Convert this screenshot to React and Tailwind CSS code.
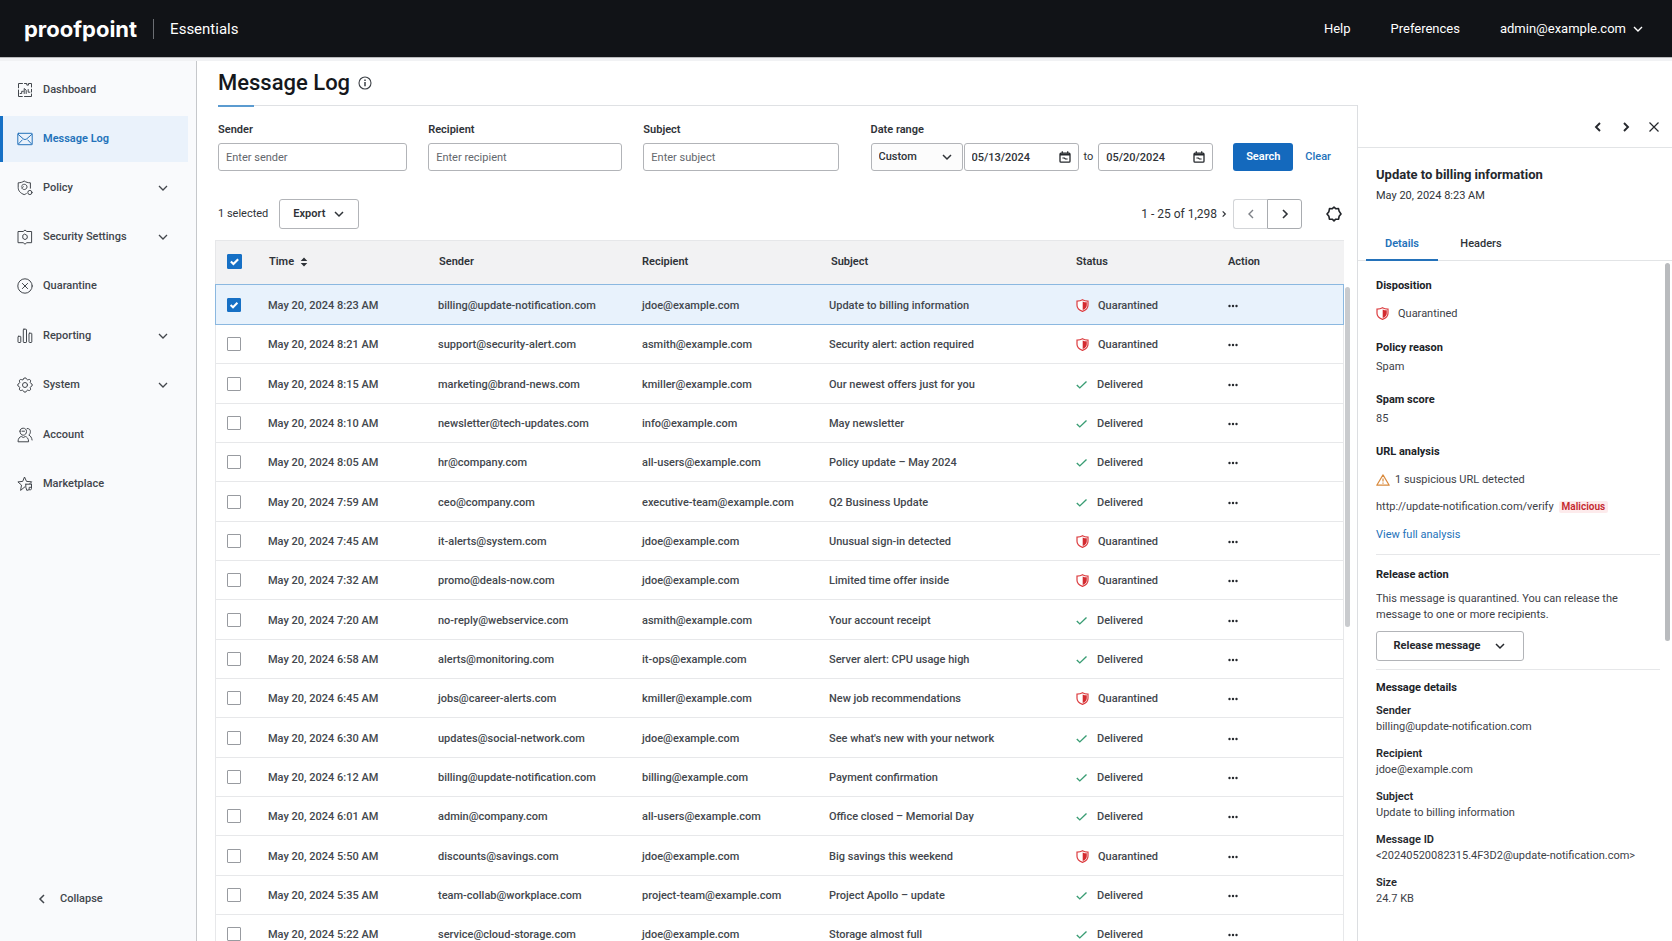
import { useState } from 'react';
import clsx from 'clsx';

const MESSAGES = [
  ['8:23 AM', 'billing@update-notification.com', 'jdoe@example.com', 'Update to billing information', 'Quarantined'],
  ['8:21 AM', 'support@security-alert.com', 'asmith@example.com', 'Security alert: action required', 'Quarantined'],
  ['8:15 AM', 'marketing@brand-news.com', 'kmiller@example.com', 'Our newest offers just for you', 'Delivered'],
  ['8:10 AM', 'newsletter@tech-updates.com', 'info@example.com', 'May newsletter', 'Delivered'],
  ['8:05 AM', 'hr@company.com', 'all-users@example.com', 'Policy update – May 2024', 'Delivered'],
  ['7:59 AM', 'ceo@company.com', 'executive-team@example.com', 'Q2 Business Update', 'Delivered'],
  ['7:45 AM', 'it-alerts@system.com', 'jdoe@example.com', 'Unusual sign-in detected', 'Quarantined'],
  ['7:32 AM', 'promo@deals-now.com', 'jdoe@example.com', 'Limited time offer inside', 'Quarantined'],
  ['7:20 AM', 'no-reply@webservice.com', 'asmith@example.com', 'Your account receipt', 'Delivered'],
  ['6:58 AM', 'alerts@monitoring.com', 'it-ops@example.com', 'Server alert: CPU usage high', 'Delivered'],
  ['6:45 AM', 'jobs@career-alerts.com', 'kmiller@example.com', 'New job recommendations', 'Quarantined'],
  ['6:30 AM', 'updates@social-network.com', 'jdoe@example.com', "See what's new with your network", 'Delivered'],
  ['6:12 AM', 'billing@update-notification.com', 'billing@example.com', 'Payment confirmation', 'Delivered'],
  ['6:01 AM', 'admin@company.com', 'all-users@example.com', 'Office closed – Memorial Day', 'Delivered'],
  ['5:50 AM', 'discounts@savings.com', 'jdoe@example.com', 'Big savings this weekend', 'Quarantined'],
  ['5:35 AM', 'team-collab@workplace.com', 'project-team@example.com', 'Project Apollo – update', 'Delivered'],
  ['5:22 AM', 'service@cloud-storage.com', 'jdoe@example.com', 'Storage almost full', 'Delivered'],
];

const NAV = [
  { label: 'Dashboard', icon: DashboardIcon },
  { label: 'Message Log', icon: MailIcon, active: true },
  { label: 'Policy', icon: PolicyIcon, expandable: true },
  { label: 'Security Settings', icon: SecurityIcon, expandable: true },
  { label: 'Quarantine', icon: QuarantineIcon },
  { label: 'Reporting', icon: ReportingIcon, expandable: true },
  { label: 'System', icon: SystemIcon, expandable: true },
  { label: 'Account', icon: AccountIcon },
  { label: 'Marketplace', icon: MarketplaceIcon },
];

const MESSAGE_DETAILS = [
  ['Sender', 'billing@update-notification.com'],
  ['Recipient', 'jdoe@example.com'],
  ['Subject', 'Update to billing information'],
  ['Message ID', '<20240520082315.4F3D2@update-notification.com>'],
  ['Size', '24.7 KB'],
];

function NavSvg({ children }) {
  return (
    <svg viewBox="0 0 16 16" className="size-4 shrink-0" fill="none" stroke="currentColor" strokeWidth="1" strokeLinejoin="round" strokeLinecap="round" aria-hidden="true">
      {children}
    </svg>
  );
}

function DashboardIcon() {
  return (
    <NavSvg>
      <path d="M5.500 1.500h-4v4.300M1.500 8v6.500h3.800M7.500 1.500h2.300v1.600h1.700V1.500h3V5M14.500 7.300V10M14.500 12v2.500H7.500" />
      <path d="M3.200 11.500h1.500V9.300h1.600M7.200 11.500V6.500l2 1.700v3.300M11.200 7.500v2.700h1.700" />
    </NavSvg>
  );
}

function MailIcon() {
  return (
    <NavSvg>
      <rect x=".8" y="2.300" width="14.400" height="11.400" rx=".8" />
      <path d="M1 3.200l5.200 4.600c1 .9 2.600.9 3.600 0L15 3.200M1.200 13.200l4-4.200M14.800 13.200l-4-4.200" />
    </NavSvg>
  );
}

function PolicyIcon() {
  return (
    <NavSvg>
      <path d="M13.400 8.200V2.800C11 2.800 9 2.200 7.200 1 5.500 2.200 3.500 2.800 1.200 2.800v4.700c0 3.400 2.300 5.800 6 7.100.8-.3 1.500-.6 2.100-1" />
      <path d="M4.500 6.200c.5-1.400 1.700-1.900 2.800-1.900 1.600 0 2.700 1.200 2.700 2.600 0 1.500-1.200 2.600-2.700 2.600-1.300 0-2.300-.8-2.600-1.800l1.600-.9" />
      <circle cx="12.900" cy="12.500" r="2.100" />
    </NavSvg>
  );
}

function SecurityIcon() {
  return (
    <NavSvg>
      <path d="M1.400 2.500h4.800L8 1l1.800 1.500h4.800v11.200H9.800L8 15.200l-1.800-1.500H1.400z" />
      <path d="M8 5.300l2.200 1.300v2.700L8 10.600 5.800 9.300V6.600z" />
    </NavSvg>
  );
}

function QuarantineIcon() {
  return (
    <NavSvg>
      <circle cx="8" cy="8" r="7.200" />
      <path d="M5.400 5.400l5.200 5.200M10.600 5.400l-5.200 5.200" />
    </NavSvg>
  );
}

function ReportingIcon() {
  return (
    <NavSvg>
      <rect x="1" y="8.300" width="2.800" height="6.200" rx=".6" />
      <rect x="6.300" y="1.200" width="3.200" height="13.300" rx=".6" />
      <rect x="12" y="5.200" width="2.800" height="9.300" rx=".6" />
    </NavSvg>
  );
}

function SystemIcon() {
  return (
    <NavSvg>
      <path d="M6.300 2.100C6.700.4 9.300.4 9.700 2.100c.2.700.9 1 1.500.6 1.500-.9 3.100.7 2.200 2.200-.4.600-.1 1.300.6 1.500 1.700.4 1.700 2.800 0 3.200-.7.200-1 .9-.6 1.500.9 1.500-.7 3.100-2.200 2.200-.6-.4-1.300-.1-1.500.6-.4 1.700-3 1.700-3.400 0-.2-.7-.9-1-1.500-.6-1.500.9-3.100-.7-2.200-2.200.4-.6.1-1.300-.6-1.500-1.700-.4-1.700-2.800 0-3.200.7-.2 1-.9.6-1.500-.9-1.500.7-3.100 2.200-2.200.6.400 1.300.1 1.500-.6z" />
      <circle cx="8" cy="8" r="2.500" />
    </NavSvg>
  );
}

function AccountIcon() {
  return (
    <NavSvg>
      <path d="M3 4.200C3 2.300 4.300 1.200 6.200 1.200S9.500 2.400 9.500 4.500 8.100 8.200 6.200 8.200 3 6.600 3 4.200zM5 4.200h2.500" />
      <path d="M1 14.400c0-2.900 1.700-4.600 3.300-4.900l2 1 2-1c1.700.4 3.300 2 3.300 4.900zM10.200 1.500c2 0 3.200 1 3.200 3.200 0 1.500-.6 2.700-1.600 3.300 1.800.9 3 2.700 3.300 5" />
    </NavSvg>
  );
}

function MarketplaceIcon() {
  return (
    <NavSvg>
      <path d="M7.800 10.900l-4.200 3.500.9-5.300L.9 5.900l4.800-.5L7.500 1l2 4.400 5.200.4-2 2M8.800 8.200h5.700M8.800 8.200v2.900l1 3.300 2-.6M14.500 8.200v4.200c0 1.300-1.200 2-2.400 1.200l.1-2.300h2.200" />
    </NavSvg>
  );
}

function Chevron({ dir = 'down', className, width = 1.8 }) {
  const d = { down: 'M2 4l4 4 4-4', left: 'M8 2L4 6l4 4', right: 'M4 2l4 4-4 4' }[dir];
  return (
    <svg viewBox="0 0 12 12" className={clsx('shrink-0', className)} fill="none" stroke="currentColor" strokeWidth={width} aria-hidden="true">
      <path d={d} />
    </svg>
  );
}

function ShieldIcon() {
  return (
    <svg viewBox="0 0 13 14" className="h-3.5 w-[13px] shrink-0" aria-hidden="true">
      <path d="M6.500.8C5 1.700 3.200 2.100 1 2.100v4.100c0 3 2 5 5.500 6.200C10 11.200 12 9.200 12 6.200V2.100C9.800 2.100 8 1.700 6.500.8z" fill="#fff" stroke="#dc3d40" strokeWidth="1.200" />
      <path d="M6.700 2.400c1.200.6 2.500.9 4.100.9v2.900c0 2.100-1.400 3.700-4.100 4.800z" fill="#d42b30" />
    </svg>
  );
}

function StatusCheck() {
  return (
    <svg viewBox="0 0 12 12" className="size-3 shrink-0" fill="none" stroke="#3a9d74" strokeWidth="1.400" aria-hidden="true">
      <path d="M.8 6l3 2.900L10.500 2.500" />
    </svg>
  );
}

function CalendarIcon() {
  return (
    <svg viewBox="0 0 12 12" className="pointer-events-none absolute top-2 right-2 size-3" fill="none" stroke="#25282d" strokeWidth="1.300" aria-hidden="true">
      <rect x="1" y="2.200" width="10" height="9" rx="1" />
      <path d="M1 3.600h10" strokeWidth="1.800" />
      <path d="M3.300.3v2M8.700.3v2M3.400 7h2l1 1h2.200" strokeWidth="1.200" />
    </svg>
  );
}

function Checkbox({ label, defaultChecked, large }) {
  return (
    <span className="relative flex w-fit">
      <input
        type="checkbox"
        aria-label={label}
        defaultChecked={defaultChecked}
        className={clsx(
          'peer appearance-none rounded-[1px] border border-[#989ba0] bg-white checked:border-[#1670c5] checked:bg-[#1670c5]',
          large ? 'size-[15px]' : 'size-[14px]'
        )}
      />
      <svg viewBox="0 0 14 14" className="pointer-events-none absolute inset-0 hidden size-full peer-checked:block" fill="none" stroke="#fff" strokeWidth="2" aria-hidden="true">
        <path d="M3.600 7l2.400 2.300 4.400-4.500" />
      </svg>
    </span>
  );
}

function Header() {
  return (
    <header className="z-10 flex h-[57px] shrink-0 items-center bg-[#111317] px-6 text-[13px] text-white shadow-[0_1px_0_#b9babc,0_4px_0_#f1f2f4]">
      <span className="font-[Inter] text-[22px] leading-7 font-bold">proofpoint</span>
      <span className="mx-4 h-5 w-px bg-[#6b6e73]" />
      <span className="text-[15px]">Essentials</span>
      <nav className="ml-auto flex items-center gap-10 pr-1">
        <a href="#help">Help</a>
        <a href="#preferences">Preferences</a>
        <button type="button" className="flex items-center gap-1.5">
          admin@example.com
          <Chevron className="size-3" width={1.4} />
        </button>
      </nav>
    </header>
  );
}

function Sidebar() {
  return (
    <aside className="flex w-[197px] shrink-0 flex-col border-r border-[#c6c8cb] bg-[#f9fafc] pt-2.5 text-[#42464c]">
      <nav className="flex flex-col gap-[3px]">
        {NAV.map(({ label, icon: Icon, active, expandable }) => (
          <a
            key={label}
            href="#nav"
            className={clsx(
              'mr-2 flex h-[46px] items-center gap-2.5 border-l-[3px] pr-[19px] pl-3.5 nth-[2n+5]:mb-px',
              active ? 'border-[#1670c5] bg-[#eaf2fb] font-semibold text-[#2472ba]' : 'border-transparent font-medium'
            )}
          >
            <Icon />
            {label}
            {expandable && <Chevron className="ml-auto size-3" width={1.3} />}
          </a>
        ))}
      </nav>
      <button type="button" className="mt-auto mb-[34px] ml-9 flex items-center gap-3 font-medium">
        <Chevron dir="left" className="size-3" width={1.5} />
        Collapse
      </button>
    </aside>
  );
}

function TextField({ id, label, placeholder }) {
  return (
    <div className="min-w-0">
      <label htmlFor={id} className="mb-[5px] block font-semibold">{label}</label>
      <input id={id} type="text" placeholder={placeholder} className="h-7 w-full rounded-[3px] border border-[#b2b4b8] bg-white px-[7px] placeholder:text-[#63676d]" />
    </div>
  );
}

function DateField({ label, value }) {
  return (
    <span className="relative">
      <input type="text" aria-label={label} defaultValue={value} className="h-7 w-[115px] rounded-[3px] border border-[#b2b4b8] bg-white px-[7px] font-medium" />
      <CalendarIcon />
    </span>
  );
}

function Filters() {
  return (
    <form className="grid grid-cols-[189fr_194fr_195fr_auto] gap-x-[21px] pt-[15px] pr-[26px]" onSubmit={(e) => e.preventDefault()}>
      <TextField id="sender" label="Sender" placeholder="Enter sender" />
      <TextField id="recipient" label="Recipient" placeholder="Enter recipient" />
      <TextField id="subject" label="Subject" placeholder="Enter subject" />
      <div className="ml-[11px]">
        <label htmlFor="range" className="mb-[5px] block font-semibold">Date range</label>
        <div className="flex items-center">
          <span className="relative mr-px">
            <select id="range" className="h-7 w-[92px] appearance-none rounded-[3px] border border-[#b2b4b8] bg-[#fcfcfc] px-[7px] font-medium">
              <option>Custom</option>
            </select>
            <Chevron className="pointer-events-none absolute top-2 right-2.5 size-3" width={1.5} />
          </span>
          <DateField label="From date" value="05/13/2024" />
          <span className="mx-[5px]">to</span>
          <DateField label="To date" value="05/20/2024" />
          <button type="submit" className="ml-5 h-7 w-[60px] rounded-[3px] bg-[#1469bd] font-semibold text-white">Search</button>
          <button type="reset" className="ml-3 font-medium text-[#2472ba]">Clear</button>
        </div>
      </div>
    </form>
  );
}

function Toolbar() {
  return (
    <div className="mt-7 flex h-[30px] items-center pr-[15px]">
      <span>1 selected</span>
      <button type="button" className="ml-[11px] flex h-[30px] w-20 items-center justify-center gap-2 rounded-[3px] border border-[#b2b4b8] font-semibold">
        Export
        <Chevron className="size-3" width={1.5} />
      </button>
      <span className="ml-auto text-[12px]">1 - 25 of 1,298</span>
      <Chevron dir="right" className="ml-[3px] size-2" width={1.8} />
      <div className="ml-[5px] flex">
        <button type="button" aria-label="Previous page" className="flex h-[30px] w-[34px] items-center justify-center rounded-l-[3px] border border-r-0 border-[#d3d5d8] text-[#7d8187]">
          <Chevron dir="left" className="size-3" width={1.4} />
        </button>
        <button type="button" aria-label="Next page" className="flex h-[30px] w-[35px] items-center justify-center rounded-r-[3px] border border-[#a9acb0]">
          <Chevron dir="right" className="size-3" width={1.6} />
        </button>
      </div>
      <button type="button" aria-label="Table settings" className="ml-6">
        <svg viewBox="0 0 16 16" className="size-4" fill="none" stroke="#202328" strokeWidth="1.600" strokeLinejoin="round" aria-hidden="true">
          <path d="M8 1.200l1.700 1.500 2.800-.1.600 2.500L15 8l-1.900 2.300-.5 2.800-2.900.1L8 14.800l-1.700-1.600-2.900-.1-.5-2.800L1 8l1.900-2.300.6-3.100 2.800.1z" />
        </svg>
      </button>
    </div>
  );
}

function MessageTable() {
  return (
    <div className="relative mt-[11px] -ml-[3px] flex-1 pr-[13px]">
      <table className="w-full table-fixed border-separate border-spacing-0 text-left">
        <colgroup>
          <col className="w-[53px]" />
          <col className="w-[170px]" />
          <col className="w-[204px]" />
          <col className="w-[187px]" />
          <col className="w-[247px]" />
          <col className="w-[152px]" />
          <col className="w-[116px]" />
        </colgroup>
        <thead>
          <tr className="h-11 bg-[#f2f2f3] *:border-t *:border-[#e6e7e9] *:p-0 *:pb-0.5 *:font-semibold">
            <th className="border-l"><div className="pl-[11px]"><Checkbox large defaultChecked label="Select all messages" /></div></th>
            <th>
              <button type="button" className="flex items-center gap-1.5 pl-px">
                Time
                <svg viewBox="0 0 8 10" className="h-2.5 w-2" fill="currentColor" aria-hidden="true">
                  <path d="M4 .5L7.300 4H.7zM4 9.500L.7 6h6.600z" />
                </svg>
              </button>
            </th>
            <th><span className="pl-px">Sender</span></th>
            <th>Recipient</th>
            <th><span className="pl-0.5">Subject</span></th>
            <th>Status</th>
            <th>Action</th>
          </tr>
        </thead>
        <tbody className="font-medium text-[#43474d]">
          {MESSAGES.map(([time, sender, recipient, subject, status], i) => (
            <tr
              key={time}
              className={clsx(
                'h-[39px] nth-[3n]:h-10 *:border-b *:p-0 *:not-first:pt-0.5',
                i === 0
                  ? 'bg-[#e8f2fc] *:border-y *:border-[#8bb8e0] first:h-[41px]'
                  : '*:border-[#e7e8ea]'
              )}
            >
              <td className="border-l">
                <div className="pl-[11px]"><Checkbox defaultChecked={i === 0} label={`Select message from ${sender}`} /></div>
              </td>
              <td>May 20, 2024 {time}</td>
              <td>{sender}</td>
              <td>{recipient}</td>
              <td>{subject}</td>
              <td>
                <span className="flex items-center gap-[9px]">
                  {status === 'Quarantined' ? <ShieldIcon /> : <StatusCheck />}
                  {status}
                </span>
              </td>
              <td className="border-r">
                <button type="button" aria-label="Message actions" className="flex text-[#25282d]">
                  <svg viewBox="0 0 10 4" className="h-1 w-2.5" fill="currentColor" aria-hidden="true">
                    <circle cx="1.500" cy="2" r="1.200" />
                    <circle cx="5" cy="2" r="1.200" />
                    <circle cx="8.500" cy="2" r="1.200" />
                  </svg>
                </button>
              </td>
            </tr>
          ))}
        </tbody>
      </table>
      <div className="absolute top-[47px] right-[7px] h-[340px] w-[5px] rounded-full bg-[#c9cbce]" />
    </div>
  );
}

function DetailPanel() {
  const [tab, setTab] = useState('Details');

  return (
    <aside className="flex w-[315px] shrink-0 flex-col border-l border-[#dcdee1]">
      <div className="flex h-[43px] items-center justify-end gap-4 border-b border-[#e2e4e6] pt-0.5 pr-3 text-[#25282d]">
        <button type="button" aria-label="Previous message"><Chevron dir="left" className="size-3" width={1.9} /></button>
        <button type="button" aria-label="Next message"><Chevron dir="right" className="size-3" width={1.9} /></button>
        <button type="button" aria-label="Close panel">
          <svg viewBox="0 0 12 12" className="size-3" fill="none" stroke="currentColor" strokeWidth="1.200" aria-hidden="true">
            <path d="M1.500 1.500l9 9M10.500 1.500l-9 9" />
          </svg>
        </button>
      </div>
      <div className="px-[18px] pt-[17px]">
        <h2 className="text-[13px] leading-5 font-bold text-[#25282d]">Update to billing information</h2>
        <p className="mt-[3px]">May 20, 2024 8:23 AM</p>
      </div>
      <div role="tablist" className="mt-[23px] flex border-b border-[#e2e4e6] pl-2">
        {['Details', 'Headers'].map((name) => (
          <button
            key={name}
            type="button"
            role="tab"
            aria-selected={tab === name}
            onClick={() => setTab(name)}
            className={clsx(
              '-mb-px h-[34px] border-b-2 pt-0.5',
              tab === name ? 'w-[72px] border-[#2472ba] font-semibold text-[#2472ba]' : 'w-[86px] border-transparent font-medium'
            )}
          >
            {name}
          </button>
        ))}
      </div>
      <div className="relative flex-1 pt-[17px] pr-3 pl-[18px] text-[#3d4147]">
        <h3 className="font-bold text-[#202328]">Disposition</h3>
        <p className="mt-3 flex items-center gap-[9px]"><ShieldIcon />Quarantined</p>
        <h3 className="mt-[18px] font-bold text-[#202328]">Policy reason</h3>
        <p className="mt-[3px]">Spam</p>
        <h3 className="mt-[17px] font-bold text-[#202328]">Spam score</h3>
        <p className="mt-[3px]">85</p>
        <h3 className="mt-[17px] font-bold text-[#202328]">URL analysis</h3>
        <p className="mt-3 flex items-center gap-[5px]">
          <svg viewBox="0 0 14 12" className="h-3 w-3.5" fill="none" stroke="#d98a3d" strokeWidth="1.200" strokeLinejoin="round" aria-hidden="true">
            <path d="M7 .9l6.200 10.300H.8zM7 4.500v3M7 8.600v1.200" />
          </svg>
          1 suspicious URL detected
        </p>
        <p className="mt-[11px] flex items-center gap-[5px]">
          http://update-notification.com/verify
          <span className="rounded-[2px] bg-[#fdebec] px-[3px] text-[10px] leading-3 font-semibold text-[#c4262c]">Malicious</span>
        </p>
        <a href="#analysis" className="mt-3 block text-[#2472ba]">View full analysis</a>

        <h3 className="mt-[11px] border-t border-[#e6e7e9] pt-3 font-bold text-[#202328]">Release action</h3>
        <p className="mt-2">This message is quarantined. You can release the message to one or more recipients.</p>
        <button type="button" className="mt-2 flex h-[30px] w-[148px] items-center justify-center gap-3.5 rounded-[3px] border border-[#b2b4b8] font-bold text-[#25282d]">
          Release message
          <Chevron className="size-3" width={1.5} />
        </button>

        <h3 className="mt-2 border-t border-[#e6e7e9] pt-2.5 font-bold text-[#202328]">Message details</h3>
        <dl className="mt-[7px] flex flex-col gap-[11px]">
          {MESSAGE_DETAILS.map(([term, value]) => (
            <div key={term}>
              <dt className="font-semibold text-[#25282d]">{term}</dt>
              <dd>{value}</dd>
            </div>
          ))}
        </dl>
        <div className="absolute top-0.5 right-0.5 h-[378px] w-[5px] rounded-full bg-[#b9bbbe]" />
      </div>
    </aside>
  );
}

export default function App() {
  return (
    <div className="flex h-screen flex-col overflow-hidden bg-white font-[Roboto,sans-serif] text-[11px] leading-4 text-[#2f3338]">
      <Header />
      <div className="flex min-h-0 flex-1">
        <Sidebar />
        <main className="flex min-w-0 flex-1 flex-col">
          <div className="flex h-12 shrink-0 items-center gap-2 pt-1 pl-[21px]">
            <h1 className="text-[22px] leading-7 font-medium text-[#15181c]">Message Log</h1>
            <svg viewBox="0 0 14 14" className="size-3.5" fill="none" stroke="#3d4147" strokeWidth="1.100" aria-hidden="true">
              <circle cx="7" cy="7" r="6" />
              <path d="M7 6v4.200M7 3.600V5" strokeWidth="1.500" />
            </svg>
          </div>
          <div className="flex min-h-0 flex-1">
            <section className="flex min-w-0 flex-1 flex-col pl-[21px]">
              <div className="h-0.5 shrink-0 border-t border-[#dfe1e4]">
                <div className="-mt-px h-0.5 w-9 bg-[#5b9bd0]" />
              </div>
              <Filters />
              <Toolbar />
              <MessageTable />
            </section>
            <DetailPanel />
          </div>
        </main>
      </div>
    </div>
  );
}
